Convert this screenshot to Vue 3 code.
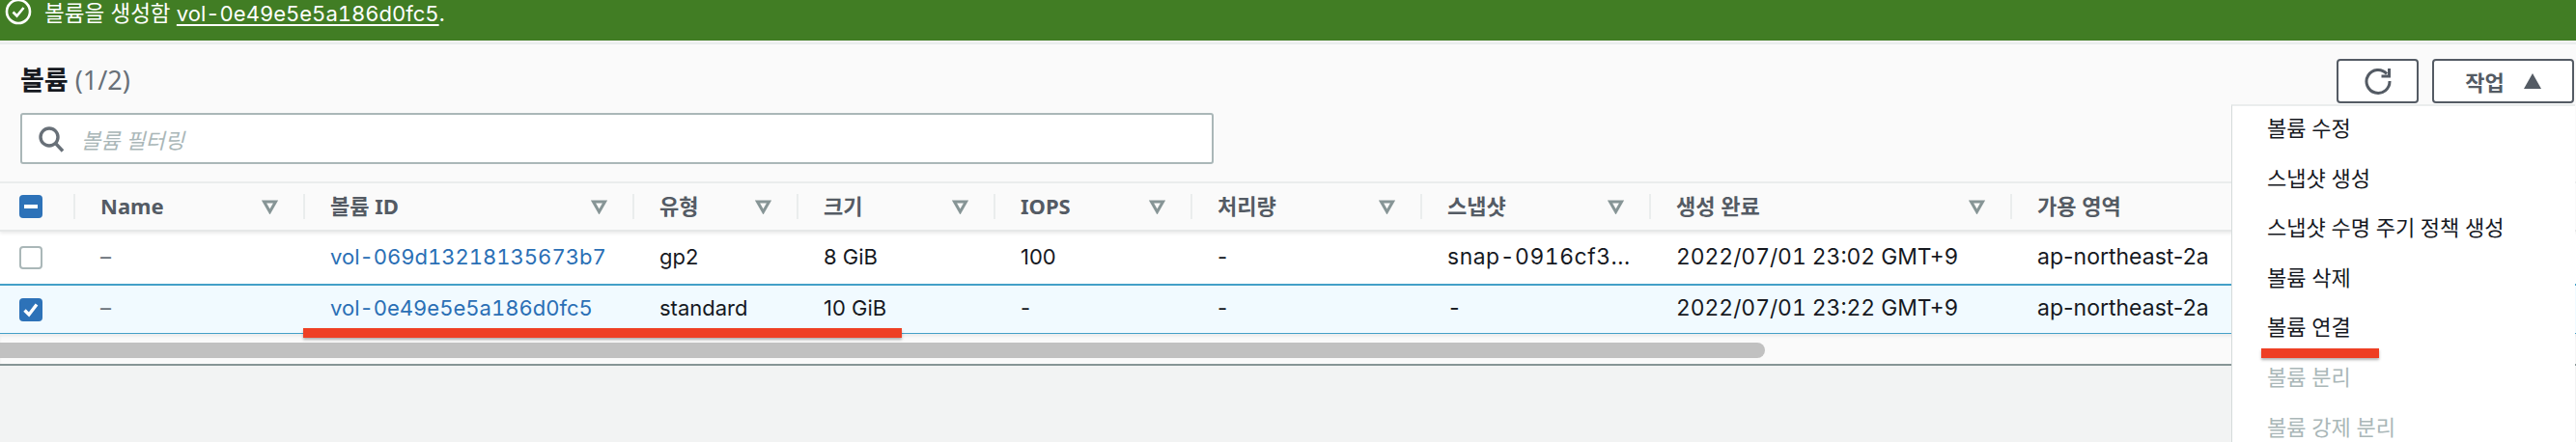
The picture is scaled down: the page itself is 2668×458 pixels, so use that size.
<script setup>
const columns = [
  { label: 'Name', width: 238 },
  { label: '볼륨 ID', width: 341 },
  { label: '유형', width: 170 },
  { label: '크기', width: 204 },
  { label: 'IOPS', width: 204 },
  { label: '처리량', width: 238 },
  { label: '스냅샷', width: 237 },
  { label: '생성 완료', width: 374 },
  { label: '가용 영역', width: 586 },
]

const gridColumns = `76px ${columns.map((c) => c.width + 'px').join(' ')}`

const rows = [
  {
    id: 'vol-069d13218135673b7', type: 'gp2', size: '8 GiB', iops: '100', throughput: '-',
    snapshot: 'snap-0916cf3...', created: '2022/07/01 23:02 GMT+9', zone: 'ap-northeast-2a', selected: false,
  },
  {
    id: 'vol-0e49e5e5a186d0fc5', type: 'standard', size: '10 GiB', iops: '-', throughput: '-',
    snapshot: '-', created: '2022/07/01 23:22 GMT+9', zone: 'ap-northeast-2a', selected: true,
  },
]

const menuItems = [
  { label: '볼륨 수정' },
  { label: '스냅샷 생성' },
  { label: '스냅샷 수명 주기 정책 생성' },
  { label: '볼륨 삭제' },
  { label: '볼륨 연결' },
  { label: '볼륨 분리', disabled: true },
  { label: '볼륨 강제 분리', disabled: true },
]
</script>

<template>
  <div class="page">
    <div class="banner">
      <svg class="banner-icon" viewBox="0 0 28 28" fill="none" stroke="#fff" stroke-width="2.6">
        <circle cx="14" cy="14" r="12" />
        <path d="M8.5 14.5l4 4 7-8.5" />
      </svg>
      <span>볼륨을 생성함 <a class="banner-link">vol-0e49e5e5a186d0fc5</a>.</span>
    </div>

    <div class="panel">
      <div class="title-row">
        <h2 class="title">볼륨 <span class="count">(1/2)</span></h2>
        <div class="actions">
          <button class="btn refresh">
            <svg width="30" height="28" viewBox="0 0 30 28" fill="none" stroke="#545b64" stroke-width="3">
              <path d="M24 6.5A12 12 0 1 0 27 14" />
              <path d="M26.5 1v8h-8" stroke-linejoin="miter" />
            </svg>
          </button>
          <button class="btn action">
            작업
            <svg width="18" height="16" viewBox="0 0 18 16"><path d="M9 0l9 16H0z" fill="#545b64" /></svg>
          </button>
        </div>
      </div>

      <div class="filter">
        <svg width="28" height="28" viewBox="0 0 28 28" fill="none" stroke="#687078" stroke-width="3.4">
          <circle cx="12" cy="12" r="9" />
          <path d="M18.5 18.5l7.5 8" />
        </svg>
        <span class="placeholder">볼륨 필터링</span>
      </div>

      <div class="table">
        <div class="thead" :style="{ gridTemplateColumns: gridColumns }">
          <div class="check-cell"><span class="check on minus"></span></div>
          <div v-for="col in columns" :key="col.label" class="th">
            <span>{{ col.label }}</span>
            <svg class="sort" width="17" height="15" viewBox="0 0 17 15" fill="none" stroke="#879596" stroke-width="3">
              <path d="M2.5 2h12L8.5 12.5z" />
            </svg>
          </div>
        </div>

        <div
          v-for="row in rows"
          :key="row.id"
          class="tr"
          :class="{ selected: row.selected }"
          :style="{ gridTemplateColumns: gridColumns }"
        >
          <div class="check-cell">
            <span v-if="row.selected" class="check on">
              <svg width="24" height="24" viewBox="0 0 24 24" fill="none" stroke="#fff" stroke-width="3.4">
                <path d="M5.5 12.5l4.5 4.5 8-10.5" />
              </svg>
            </span>
            <span v-else class="check"></span>
          </div>
          <div class="td name">–</div>
          <div class="td link">{{ row.id }}</div>
          <div class="td">{{ row.type }}</div>
          <div class="td">{{ row.size }}</div>
          <div class="td">{{ row.iops }}</div>
          <div class="td">{{ row.throughput }}</div>
          <div class="td num snap">{{ row.snapshot }}</div>
          <div class="td num">{{ row.created }}</div>
          <div class="td zone">{{ row.zone }}</div>
        </div>

        <div class="scroll-track"><div class="scroll-thumb"></div></div>
      </div>
    </div>

    <ul class="menu">
      <li v-for="item in menuItems" :key="item.label" :class="{ disabled: item.disabled }">{{ item.label }}</li>
    </ul>

    <!-- red annotation marks drawn over the screenshot -->
    <div class="mark mark-row"></div>
    <div class="mark mark-menu"></div>
  </div>
</template>

<style>
html, body {
  margin: 0;
  background: #f2f3f3;
}
</style>

<style scoped>
.page {
  position: relative;
  width: 2668px;
  height: 458px;
  overflow: hidden;
  font-family: "Noto Sans", "Noto Sans CJK KR", sans-serif;
  font-size: 22px;
  color: #16191f;
}

.banner {
  height: 42px;
  background: #417d24;
  color: #fff;
  display: flex;
  align-items: flex-start;
  gap: 13px;
  padding-left: 5px;
  box-sizing: border-box;
  line-height: 27px;
  font-family: Inter, "Noto Sans CJK KR", sans-serif;
  font-size: 22.5px;
}

.banner-icon {
  width: 28px;
  height: 28px;
  margin-top: -2px;
  flex: none;
}

.banner-link {
  color: #fff;
  text-decoration: underline;
  text-underline-offset: 3px;
  font-size: 22px;
  font-variant-numeric: tabular-nums;
}

.panel {
  margin-top: 2px;
  background: #fafafa;
  border-top: 2px solid #eaeded;
  padding-top: 15px;
  border-bottom: 2px solid #879596;
}

.title-row {
  display: flex;
  justify-content: space-between;
  padding: 0 2px 0 21px;
  height: 46px;
}

.title {
  margin: 0;
  font-size: 27px;
  line-height: 44px;
  font-weight: 700;
}

.count {
  font-weight: 400;
  color: #687078;
}

.actions {
  display: flex;
  gap: 14px;
}

.btn {
  height: 46px;
  box-sizing: border-box;
  border: 2px solid #545b64;
  border-radius: 4px;
  background: #fff;
  color: #545b64;
  font: inherit;
  font-weight: 700;
  display: flex;
  align-items: center;
  justify-content: center;
  padding: 0;
}

.refresh {
  width: 85px;
}

.action {
  width: 147px;
  gap: 20px;
}

.filter {
  margin: 10px 0 18px 21px;
  width: 1236px;
  height: 53px;
  box-sizing: border-box;
  border: 2px solid #aab7b8;
  border-radius: 3px;
  background: #fff;
  display: flex;
  align-items: center;
  gap: 17px;
  padding-left: 16px;
}

.placeholder {
  color: #aab7b8;
  font-style: italic;
  font-size: 22px;
}

.table {
  border-top: 2px solid #eaeded;
  overflow: hidden;
}

.thead {
  display: grid;
  height: 48px;
  align-items: center;
  border-bottom: 2px solid #e6e8e8;
  box-shadow: 0 2px 3px rgba(0, 0, 0, 0.08);
  position: relative;
}

.check-cell {
  padding-left: 20px;
  display: flex;
}

.check {
  width: 24px;
  height: 24px;
  box-sizing: border-box;
  border: 2px solid #aab7b8;
  border-radius: 4px;
  background: #fff;
  display: block;
}

.check.on {
  background: #2d72b8;
  border: none;
}

.check.minus {
  position: relative;
}

.check.minus::after {
  content: "";
  position: absolute;
  left: 5px;
  right: 5px;
  top: 10px;
  height: 4px;
  background: #fff;
}

.th {
  height: 26px;
  line-height: 26px;
  border-left: 2px solid #eaeded;
  padding: 0 26px 0 26px;
  display: flex;
  align-items: center;
  justify-content: space-between;
  color: #545b64;
  font-weight: 700;
  min-width: 0;
}

.th span {
  margin-top: -3px;
}

.tr {
  display: grid;
  height: 54px;
  align-items: center;
  background: #fff;
}

.tr.selected {
  background: #f1faff;
  border-top: 2px solid #44a0c8;
  border-bottom: 1px solid #44a0c8;
  height: 49px;
}

.td {
  padding-left: 28px;
  white-space: nowrap;
  font-family: Inter, "Noto Sans CJK KR", sans-serif;
  line-height: 28px;
  margin-top: -3px;
}

.td.num {
  font-size: 22.8px;
  font-variant-numeric: tabular-nums;
}

.td.snap {
  letter-spacing: 0.6px;
}

.td.zone {
  font-size: 23px;
}

.td.name {
  color: #687078;
}

.td.link {
  color: #2a6fb5;
  font-variant-numeric: tabular-nums;
}

.scroll-track {
  height: 31px;
  padding-top: 9px;
  box-sizing: border-box;
  box-shadow: inset 0 3px 3px rgba(0, 0, 0, 0.05);
}

.scroll-thumb {
  width: 1828px;
  height: 16px;
  background: #c1c1c1;
  border-radius: 0 8px 8px 0;
}

.menu {
  position: absolute;
  top: 108px;
  left: 2311px;
  width: 356px;
  height: 350px;
  margin: 0;
  padding: 0;
  list-style: none;
  box-sizing: border-box;
  background: #fff;
  border-left: 1px solid #d5dbdb;
  border-top: 2px solid #eaeded;
}

.menu li {
  height: 51.6px;
  line-height: 44px;
  padding-left: 36px;
}

.menu li.disabled {
  color: #aab7b8;
}

.mark {
  position: absolute;
  height: 10px;
  background: #ee3f24;
  box-shadow: 0 2px 3px rgba(0, 0, 0, 0.3);
}

.mark-row {
  left: 314px;
  top: 340px;
  width: 620px;
}

.mark-menu {
  left: 2342px;
  top: 361px;
  width: 122px;
}
</style>
